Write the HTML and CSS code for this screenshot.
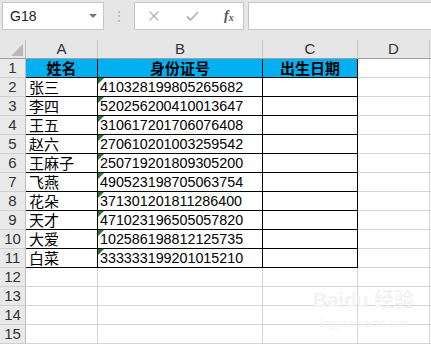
FILE: index.html
```html
<!DOCTYPE html>
<html lang="zh-CN">
<head>
    <meta charset="UTF-8">
    <title>身份证号 - 出生日期</title>
    <link rel="stylesheet" href="styles.css">
</head>
<body>
    <div class="toolbar">
        <div class="name-box">
            <span class="cell-ref">G18</span>
            <span class="dropdown"></span>
        </div>
        <div class="grip">⋮</div>
        <div class="fx-buttons">
            <svg class="fx-icon" width="12" height="12" viewBox="0 0 12 12"><path d="M1.5 1.5 L10.5 10.5 M10.5 1.5 L1.5 10.5" stroke="#b4b4b4" stroke-width="1.4" fill="none"/></svg>
            <svg class="fx-icon" width="13" height="12" viewBox="0 0 13 12"><path d="M1 6.5 L4.5 10 L12 2" stroke="#b4b4b4" stroke-width="1.8" fill="none"/></svg>
            <span class="fx">f<sub>x</sub></span>
        </div>
        <div class="formula-input"></div>
    </div>

    <div class="sheet">
        <div class="corner"><span class="select-all"></span></div>
        <div class="col-head">A</div>
        <div class="col-head">B</div>
        <div class="col-head">C</div>
        <div class="col-head">D</div>
        <div class="col-head edge"></div>

        <div class="row-head">1</div>
        <div class="cell boxed title">姓名</div>
        <div class="cell boxed title">身份证号</div>
        <div class="cell boxed title">出生日期</div>
        <div class="cell"></div>
        <div class="cell"></div>

        <div class="row-head">2</div>
        <div class="cell boxed">张三</div>
        <div class="cell boxed id">410328199805265682</div>
        <div class="cell boxed"></div>
        <div class="cell"></div>
        <div class="cell"></div>

        <div class="row-head">3</div>
        <div class="cell boxed">李四</div>
        <div class="cell boxed id">520256200410013647</div>
        <div class="cell boxed"></div>
        <div class="cell"></div>
        <div class="cell"></div>

        <div class="row-head">4</div>
        <div class="cell boxed">王五</div>
        <div class="cell boxed id">310617201706076408</div>
        <div class="cell boxed"></div>
        <div class="cell"></div>
        <div class="cell"></div>

        <div class="row-head">5</div>
        <div class="cell boxed">赵六</div>
        <div class="cell boxed id">270610201003259542</div>
        <div class="cell boxed"></div>
        <div class="cell"></div>
        <div class="cell"></div>

        <div class="row-head">6</div>
        <div class="cell boxed">王麻子</div>
        <div class="cell boxed id">250719201809305200</div>
        <div class="cell boxed"></div>
        <div class="cell"></div>
        <div class="cell"></div>

        <div class="row-head">7</div>
        <div class="cell boxed">飞燕</div>
        <div class="cell boxed id">490523198705063754</div>
        <div class="cell boxed"></div>
        <div class="cell"></div>
        <div class="cell"></div>

        <div class="row-head">8</div>
        <div class="cell boxed">花朵</div>
        <div class="cell boxed id">371301201811286400</div>
        <div class="cell boxed"></div>
        <div class="cell"></div>
        <div class="cell"></div>

        <div class="row-head">9</div>
        <div class="cell boxed">天才</div>
        <div class="cell boxed id">471023196505057820</div>
        <div class="cell boxed"></div>
        <div class="cell"></div>
        <div class="cell"></div>

        <div class="row-head">10</div>
        <div class="cell boxed">大爱</div>
        <div class="cell boxed id">102586198812125735</div>
        <div class="cell boxed"></div>
        <div class="cell"></div>
        <div class="cell"></div>

        <div class="row-head">11</div>
        <div class="cell boxed">白菜</div>
        <div class="cell boxed id">333333199201015210</div>
        <div class="cell boxed"></div>
        <div class="cell"></div>
        <div class="cell"></div>

        <div class="row-head">12</div>
        <div class="cell"></div>
        <div class="cell"></div>
        <div class="cell"></div>
        <div class="cell"></div>
        <div class="cell"></div>

        <div class="row-head">13</div>
        <div class="cell"></div>
        <div class="cell"></div>
        <div class="cell"></div>
        <div class="cell"></div>
        <div class="cell"></div>

        <div class="row-head">14</div>
        <div class="cell"></div>
        <div class="cell"></div>
        <div class="cell"></div>
        <div class="cell"></div>
        <div class="cell"></div>

        <div class="row-head">15</div>
        <div class="cell"></div>
        <div class="cell"></div>
        <div class="cell"></div>
        <div class="cell"></div>
        <div class="cell"></div>
    </div>

    <div class="watermark">
        <div class="wm-logo">Bai<span class="paw">du</span> 经验</div>
        <div class="wm-url">jingyan.baidu.com</div>
    </div>
</body>
</html>
```

FILE: styles.css
```css
* {
    margin: 0;
    padding: 0;
    box-sizing: border-box;
}

body {
    font-family: "Liberation Sans", Arial, "Noto Sans CJK SC", sans-serif;
    background-color: #e6e6e6;
    width: 431px;
    height: 344px;
    overflow: hidden;
    position: relative;
    color: #000;
}

/* formula bar */
.toolbar {
    height: 40px;
    padding-top: 2px;
    display: flex;
    align-items: flex-start;
}

.name-box {
    margin-left: 2px;
    width: 102px;
    height: 28px;
    background: #fff;
    border: 1px solid #c6c6c6;
    display: flex;
    align-items: center;
    justify-content: space-between;
    padding: 0 6px 0 7px;
}

.cell-ref {
    font-size: 14px;
    color: #222;
}

.dropdown {
    width: 0;
    height: 0;
    border-left: 4px solid transparent;
    border-right: 4px solid transparent;
    border-top: 4px solid #777;
}

.grip {
    width: 30px;
    text-align: center;
    color: #b0b0b0;
    font-size: 14px;
    line-height: 28px;
}

.fx-buttons {
    width: 110px;
    height: 28px;
    background: #fff;
    border: 1px solid #c6c6c6;
    display: flex;
    align-items: center;
    padding-left: 13px;
}

.fx-icon:first-child {
    margin-right: 26px;
}

.fx-icon + .fx-icon {
    margin-right: 25px;
}

.fx {
    font-family: "Liberation Serif", serif;
    font-style: italic;
    font-weight: bold;
    font-size: 14px;
    color: #555;
}

.fx sub {
    font-size: 10px;
    vertical-align: -1px;
}

.formula-input {
    margin-left: 4px;
    flex: 1;
    height: 28px;
    background: #fff;
    border: 1px solid #c6c6c6;
    border-right: none;
}

/* grid */
.sheet {
    display: grid;
    grid-template-columns: 26px 72px 165px 95px 72px 1fr;
    grid-auto-rows: 19px;
    background: #fff;
}

.corner,
.col-head,
.row-head {
    background: #e6e6e6;
    color: #333;
    font-size: 15px;
    line-height: 18px;
    text-align: center;
}

.corner {
    position: relative;
    border-right: 1px solid #bdbdbd;
    border-bottom: 1px solid #9e9e9e;
}

.select-all {
    position: absolute;
    right: 2px;
    bottom: 2px;
    width: 0;
    height: 0;
    border-left: 12px solid transparent;
    border-bottom: 12px solid #b9b9b9;
}

.col-head {
    border-right: 1px solid #c8c8c8;
    border-bottom: 1px solid #9e9e9e;
}

.col-head.edge {
    border-right: none;
}

.row-head {
    border-right: 1px solid #bdbdbd;
    border-bottom: 1px solid #d0d0d0;
    background: #e9e9e9;
}

.cell {
    border-right: 1px solid #d4d4d4;
    border-bottom: 1px solid #d4d4d4;
    font-size: 15px;
    line-height: 18px;
    padding-left: 3px;
    white-space: nowrap;
    font-family: "Noto Sans CJK SC", sans-serif;
    position: relative;
}

.cell.boxed {
    border-right-color: #000;
    border-bottom-color: #000;
}

.cell.title {
    background: #00b0f0;
    font-weight: bold;
    text-align: center;
    padding-left: 0;
}

.cell.id {
    font-family: "Liberation Sans", Arial, sans-serif;
    font-size: 14.3px;
    padding-left: 2px;
}

.cell.id::before {
    content: "";
    position: absolute;
    left: 0;
    top: 0;
    border-top: 6px solid #1f7a3a;
    border-right: 6px solid transparent;
}

/* watermark */
.watermark {
    position: absolute;
    left: 313px;
    top: 288px;
    color: #f3f3f3;
    text-align: center;
    pointer-events: none;
}

.wm-logo {
    font-size: 20px;
    font-weight: bold;
    font-family: "Liberation Sans", "Noto Sans CJK SC", sans-serif;
    line-height: 24px;
}

.wm-url {
    font-size: 11px;
    line-height: 14px;
    margin-top: 4px;
}
```
